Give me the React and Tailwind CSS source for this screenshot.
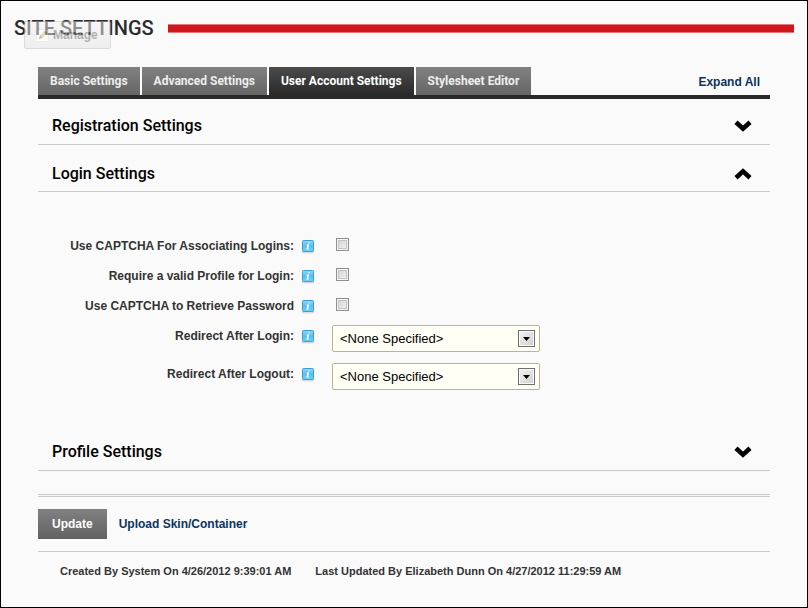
import React from "react";

const tabs = ["Basic Settings", "Advanced Settings", "User Account Settings", "Stylesheet Editor"];

function Chevron({ up }) {
  return (
    <svg width="18" height="12" viewBox="0 0 18 12" fill="none" stroke="#000" strokeWidth="4.6" aria-hidden="true">
      <path d={up ? "M2 9.8 L9 3.4 L16 9.8" : "M2 2.2 L9 8.6 L16 2.2"} />
    </svg>
  );
}

function InfoIcon() {
  return (
    <svg width="14" height="15" viewBox="0 0 14 15" aria-hidden="true">
      <defs>
        <linearGradient id="info" x1="0" y1="0" x2="0" y2="1">
          <stop offset="0" stopColor="#8fd6f7" />
          <stop offset="0.5" stopColor="#58bff0" />
          <stop offset="1" stopColor="#6ed2f6" />
        </linearGradient>
      </defs>
      <rect x="1" y="12" width="12" height="2.4" rx="1" fill="#d9dcde" />
      <rect x="1.5" y="1.5" width="11" height="11" rx="0.8" fill="url(#info)" stroke="#3d9fd8" />
      <path d="M7.6 3.2h1.2l-.3 1.3H7.3zM5.7 5.5h2.5L7.2 9.7h.9l-.2.9H5.4l.9-4.2h-.8z" fill="#fff" />
    </svg>
  );
}

function SectionHeader({ title, open, className }) {
  return (
    <h2 className={"border-b border-[#c9c9c9] " + className}>
      <button type="button" aria-expanded={open} className="flex h-full w-full items-center justify-between pr-[18px] pl-[14px] font-[Roboto,sans-serif] text-[16px] leading-6 font-medium text-black">
        {title}
        <Chevron up={open} />
      </button>
    </h2>
  );
}

function Label({ htmlFor, children }) {
  return (
    <div className="flex w-[277px] items-center justify-end gap-[7px]">
      <label htmlFor={htmlFor} className="text-[12px] leading-4 font-bold text-[#333]">{children}</label>
      <InfoIcon />
    </div>
  );
}

function CheckRow({ id, label }) {
  return (
    <div className="flex h-[30px] items-start gap-[21px]">
      <div className="pt-2">
        <Label htmlFor={id}>{label}</Label>
      </div>
      <input id={id} type="checkbox" className="mt-2 size-[13px] appearance-none border border-[#8e8f8f] bg-linear-to-br from-[#cfcfcf] to-[#f6f6f6] shadow-[inset_0_0_0_1px_#f4f4f4,inset_0_0_0_2px_#c4c4c4]" />
    </div>
  );
}

function SelectRow({ id, label }) {
  return (
    <div className="flex items-start gap-[17px]">
      <div className="pt-[3px]">
        <Label htmlFor={id}>{label}</Label>
      </div>
      <div className="relative w-[208px]">
        <select id={id} className="block h-[27px] w-full appearance-none rounded-[2px] border border-[#bcb48c] bg-[#fffff5] px-[7px] text-[13px] text-black">
          <option>&lt;None Specified&gt;</option>
        </select>
        <span className="pointer-events-none absolute top-[5px] right-[5px] flex h-[17px] w-[17px] items-center justify-center border border-[#707070] bg-linear-to-br from-[#f4f4f4] to-[#cfcfcf] shadow-[inset_0_0_0_1px_#fafafa]">
          <svg width="7" height="4" viewBox="0 0 7 4"><path d="M0 0h7L3.5 4z" fill="#000" /></svg>
        </span>
      </div>
    </div>
  );
}

export default function App() {
  return (
    <div className="min-h-screen border border-black bg-[#fafafa] font-['Liberation_Sans',Arial,sans-serif] text-[12px] text-[#333]">
      <header className="relative flex items-center gap-[14px] pt-[11px] pr-[13px] pl-[13px]">
        <h1 className="font-[Roboto,sans-serif] text-[20px] leading-8 font-medium text-[#2b2b2b]">SITE SETTINGS</h1>
        <div className="h-[9px] flex-1 border-y border-[#e5777b] bg-[#d1171d]" />
        <button type="button" className="absolute top-[20px] left-[23px] flex h-7 w-[87px] items-center gap-[4px] rounded-[2px] border border-[#bbb] bg-linear-to-b from-[#f4f4f4] to-[#e4e4e4] pl-[11px] text-[12px] font-bold text-[#666] opacity-50">
          <svg width="13" height="13" viewBox="0 0 13 13" aria-hidden="true">
            <rect x="0.5" y="0.5" width="12" height="12" rx="1" fill="#fff" stroke="#ddd" />
            <path d="M3 10l1-3.5L8.5 2l2.3 2.3L6.3 9z" fill="#e3b96a" />
            <path d="M3 10l1-3.5L6.3 9z" fill="#777" />
            <path d="M7.5 3L8.8 1.7l2.3 2.3L9.8 5.3z" fill="#8fb573" />
          </svg>
          Manage
        </button>
      </header>

      <main className="px-[37px] pt-[23px]">
        <nav className="flex items-end justify-between border-b-4 border-[#2a2a2a]">
          <div role="tablist" className="flex gap-[2px]">
            {tabs.map((tab, i) => (
              <button
                key={tab}
                type="button"
                role="tab"
                aria-selected={i === 2}
                className={
                  "h-7 px-3 font-[Roboto,sans-serif] text-[12px] font-bold whitespace-nowrap bg-linear-to-b " +
                  (i === 2 ? "from-[#4b4b4b] to-[#2a2a2a] text-white" : "from-[#818181] to-[#666] text-[#eee]")
                }
              >
                {tab}
              </button>
            ))}
          </div>
          <a href="#expand" className="pr-[10px] pb-[5px] text-[12px] leading-4 font-bold text-[#0b3560]">Expand All</a>
        </nav>

        <SectionHeader title="Registration Settings" open={false} className="h-[46px] pt-[9px]" />
        <SectionHeader title="Login Settings" open className="h-[47px] pt-[11px]" />

        <form className="pt-[38px]">
          <CheckRow id="captcha-logins" label="Use CAPTCHA For Associating Logins:" />
          <CheckRow id="valid-profile" label="Require a valid Profile for Login:" />
          <CheckRow id="captcha-password" label="Use CAPTCHA to Retrieve Password" />
          <div className="flex flex-col gap-[11px] pt-[5px]">
            <SelectRow id="after-login" label="Redirect After Login:" />
            <SelectRow id="after-logout" label="Redirect After Logout:" />
          </div>
        </form>

        <SectionHeader title="Profile Settings" open={false} className="mt-[35px] h-[46px] pt-[9px]" />

        <div className="mt-[23px] h-[3px] border-y border-[#c9c9c9]" />
        <div className="flex items-center gap-3 border-b border-[#c9c9c9] py-3">
          <button type="button" className="h-[30px] bg-linear-to-b from-[#818181] to-[#626262] px-[14px] text-[12px] font-bold text-white">Update</button>
          <a href="#upload" className="font-bold text-[#0b3560]">Upload Skin/Container</a>
        </div>
        <footer className="flex gap-6 pt-[11px] pl-[22px] text-[11px] leading-4 font-bold">
          <span>Created By System On 4/26/2012 9:39:01 AM</span>
          <span>Last Updated By Elizabeth Dunn On 4/27/2012 11:29:59 AM</span>
        </footer>
      </main>
    </div>
  );
}
